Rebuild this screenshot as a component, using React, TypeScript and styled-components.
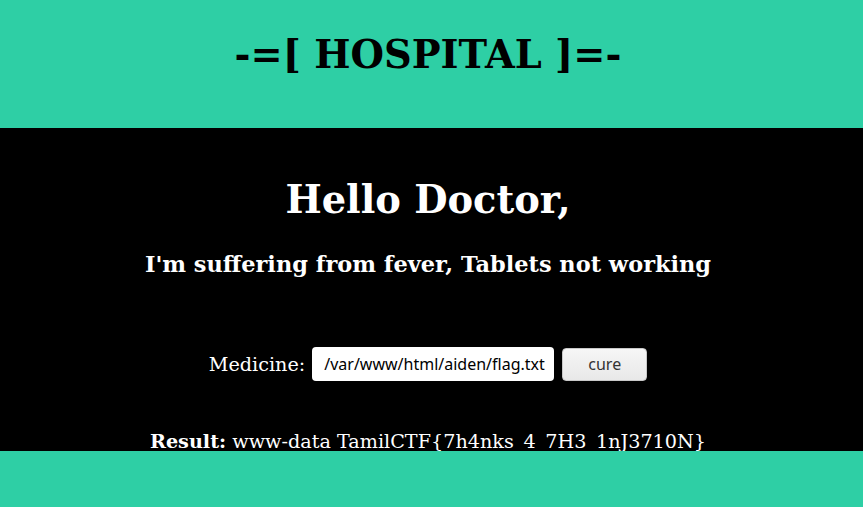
import React from "react";
import styled, { createGlobalStyle } from "styled-components";

const Global = createGlobalStyle`
  html, body { margin: 0; padding: 0; }
  body {
    background: #2ecfa5;
    font-family: "DejaVu Serif", serif;
    width: 863px;
    height: 507px;
    overflow: hidden;
  }
`;

const Page = styled.div`
  display: flex;
  flex-direction: column;
  width: 863px;
`;

const Header = styled.header`
  height: 128px;
  box-sizing: border-box;
  padding: 32px 7px 0 0;
  background: #2ecfa5;
  display: flex;
  justify-content: center;
  align-items: flex-start;
`;

const Title = styled.h1`
  margin: 0;
  font-size: 38.4px;
  line-height: normal;
  font-weight: bold;
  color: #000;
`;

const Main = styled.main`
  height: 323px;
  overflow: hidden;
  background: #000;
  color: #fff;
  display: flex;
  flex-direction: column;
  align-items: center;
  box-sizing: border-box;
  padding: 49px 7px 0 0;
`;

const Greeting = styled.h2`
  margin: 0;
  font-size: 38.4px;
  line-height: normal;
  font-weight: bold;
`;

const Complaint = styled.h3`
  margin: 29px 0 0;
  font-size: 22.46px;
  line-height: normal;
  font-weight: bold;
`;

const Form = styled.form`
  margin-top: 70px;
  display: flex;
  align-items: center;
`;

const Label = styled.label`
  font-size: 19.2px;
  margin-right: 7px;
`;

const Input = styled.input`
  width: 242px;
  height: 34px;
  box-sizing: border-box;
  border: none;
  border-radius: 4px;
  padding: 0 8px 0 12px;
  margin-right: 8px;
  font-family: "Noto Sans", sans-serif;
  font-size: 16px;
  color: #000;
  background: #fff;
  outline: none;
`;

const Button = styled.button`
  width: 85px;
  height: 33px;
  box-sizing: border-box;
  border: 1px solid #c8c8c8;
  border-radius: 4px;
  background: linear-gradient(#f6f6f6, #e8e8e8);
  font-family: "Noto Sans", sans-serif;
  font-size: 16px;
  color: #333;
`;

const Result = styled.p`
  margin: 49px 0 0;
  font-size: 19.2px;
  line-height: normal;
`;

export default function App() {
  return (
    <Page>
      <Global />
      <Header>
        <Title>-=[ HOSPITAL ]=-</Title>
      </Header>
      <Main>
        <Greeting>Hello Doctor,</Greeting>
        <Complaint>I'm suffering from fever, Tablets not working</Complaint>
        <Form onSubmit={(e) => e.preventDefault()}>
          <Label htmlFor="med">Medicine:</Label>
          <Input id="med" defaultValue="/var/www/html/aiden/flag.txt" />
          <Button type="submit">cure</Button>
        </Form>
        <Result>
          <b>Result:</b> www-data TamilCTF{"{"}7h4nks_4_7H3_1nJ3710N{"}"}
        </Result>
      </Main>
    </Page>
  );
}
